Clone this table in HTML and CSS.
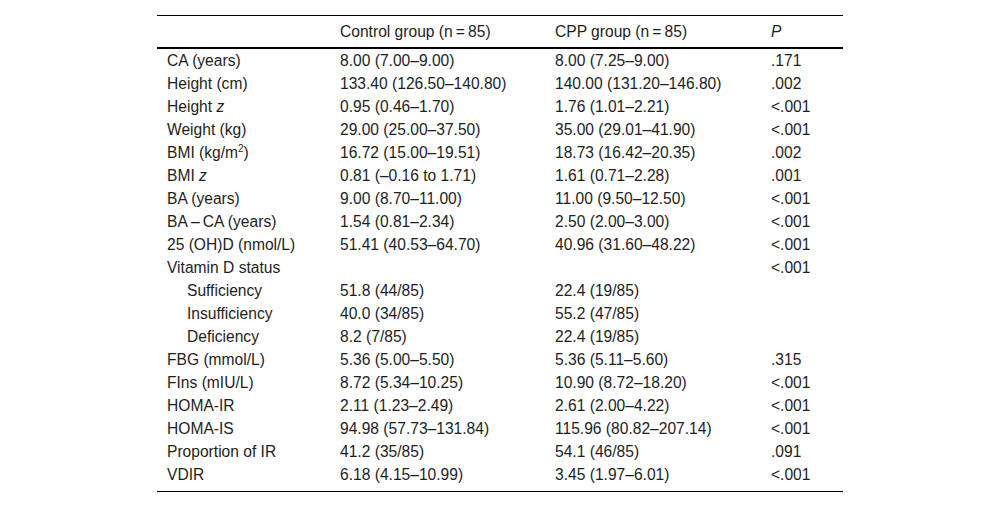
FILE: index.html
```html
<!DOCTYPE html>
<html>
<head>
<meta charset="utf-8">
<link rel="stylesheet" href="styles.css">
</head>
<body>
<table class="data">
  <colgroup>
    <col class="c1"><col class="c2"><col class="c3"><col class="c4">
  </colgroup>
  <thead>
    <tr><th></th><th>Control group (n&#8201;=&#8201;85)</th><th>CPP group (n&#8201;=&#8201;85)</th><th><i>P</i></th></tr>
  </thead>
  <tbody>
    <tr><td>CA (years)</td><td>8.00 (7.00–9.00)</td><td>8.00 (7.25–9.00)</td><td>.171</td></tr>
    <tr><td>Height (cm)</td><td>133.40 (126.50–140.80)</td><td>140.00 (131.20–146.80)</td><td>.002</td></tr>
    <tr><td>Height <i>z</i></td><td>0.95 (0.46–1.70)</td><td>1.76 (1.01–2.21)</td><td>&lt;.001</td></tr>
    <tr><td>Weight (kg)</td><td>29.00 (25.00–37.50)</td><td>35.00 (29.01–41.90)</td><td>&lt;.001</td></tr>
    <tr><td>BMI (kg/m<sup>2</sup>)</td><td>16.72 (15.00–19.51)</td><td>18.73 (16.42–20.35)</td><td>.002</td></tr>
    <tr><td>BMI <i>z</i></td><td>0.81 (–0.16 to 1.71)</td><td>1.61 (0.71–2.28)</td><td>.001</td></tr>
    <tr><td>BA (years)</td><td>9.00 (8.70–11.00)</td><td>11.00 (9.50–12.50)</td><td>&lt;.001</td></tr>
    <tr><td>BA&#8201;–&#8201;CA (years)</td><td>1.54 (0.81–2.34)</td><td>2.50 (2.00–3.00)</td><td>&lt;.001</td></tr>
    <tr><td>25 (OH)D (nmol/L)</td><td>51.41 (40.53–64.70)</td><td>40.96 (31.60–48.22)</td><td>&lt;.001</td></tr>
    <tr><td>Vitamin D status</td><td></td><td></td><td>&lt;.001</td></tr>
    <tr><td class="sub">Sufficiency</td><td>51.8 (44/85)</td><td>22.4 (19/85)</td><td></td></tr>
    <tr><td class="sub">Insufficiency</td><td>40.0 (34/85)</td><td>55.2 (47/85)</td><td></td></tr>
    <tr><td class="sub">Deficiency</td><td>8.2 (7/85)</td><td>22.4 (19/85)</td><td></td></tr>
    <tr><td>FBG (mmol/L)</td><td>5.36 (5.00–5.50)</td><td>5.36 (5.11–5.60)</td><td>.315</td></tr>
    <tr><td>FIns (mIU/L)</td><td>8.72 (5.34–10.25)</td><td>10.90 (8.72–18.20)</td><td>&lt;.001</td></tr>
    <tr><td>HOMA-IR</td><td>2.11 (1.23–2.49)</td><td>2.61 (2.00–4.22)</td><td>&lt;.001</td></tr>
    <tr><td>HOMA-IS</td><td>94.98 (57.73–131.84)</td><td>115.96 (80.82–207.14)</td><td>&lt;.001</td></tr>
    <tr><td>Proportion of IR</td><td>41.2 (35/85)</td><td>54.1 (46/85)</td><td>.091</td></tr>
    <tr class="last"><td>VDIR</td><td>6.18 (4.15–10.99)</td><td>3.45 (1.97–6.01)</td><td>&lt;.001</td></tr>
  </tbody>
</table>
</body>
</html>
```
FILE: styles.css
```css
html, body {
  margin: 0;
  padding: 0;
  background: #fff;
}
body {
  padding-top: 15px;
  font-family: "Liberation Sans", Arial, sans-serif;
  font-size: 15.6px;
  color: #1e1e1e;
}
.data {
  width: 686px;
  margin: 0 auto;
  border-collapse: collapse;
  table-layout: fixed;
}
.c1 { width: 173px; }
.c2 { width: 215px; }
.c3 { width: 216px; }
.c4 { width: 82px; }
.data th {
  font-weight: normal;
  text-align: left;
  height: 31px;
  padding: 0 0 0 10px;
  vertical-align: middle;
  border-top: 1px solid #000;
  border-bottom: 2px solid #000;
}
.data td {
  height: 23px;
  padding: 0 0 0 10px;
  vertical-align: middle;
  white-space: nowrap;
}
.data td.sub {
  padding-left: 30px;
}
.data tr.last td {
  border-bottom: 1px solid #000;
  height: 28px;
  vertical-align: top;
  padding-top: 3px;
  box-sizing: border-box;
}
sup {
  font-size: 10px;
  line-height: 0;
  vertical-align: 6px;
}
```
